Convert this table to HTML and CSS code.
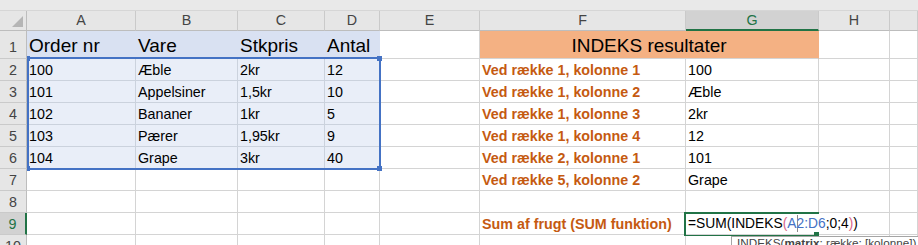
FILE: index.html
```html
<!DOCTYPE html>
<html lang="da">
<head>
    <meta charset="UTF-8">
    <meta name="viewport" content="width=device-width, initial-scale=1.0">
    <title>INDEKS eksempel</title>
    <link rel="stylesheet" href="styles.css">
</head>
<body>
    <div class="sheet">
        <div class="strip"></div>

        <!-- kolonneoverskrifter -->
        <div class="cell corner">
            <svg width="11" height="11" viewBox="0 0 11 11"><polygon points="0,11 11,11 11,0" fill="#b5b5b5"/></svg>
        </div>
        <div class="cell col">A</div>
        <div class="cell col">B</div>
        <div class="cell col">C</div>
        <div class="cell col">D</div>
        <div class="cell col">E</div>
        <div class="cell col">F</div>
        <div class="cell col sel">G</div>
        <div class="cell col">H</div>
        <div class="cell col"></div>

        <!-- række 1 -->
        <div class="cell rh big-row">1</div>
        <div class="cell big blue">Order nr</div>
        <div class="cell big blue">Vare</div>
        <div class="cell big blue">Stkpris</div>
        <div class="cell big blue">Antal</div>
        <div class="cell"></div>
        <div class="cell big peach">INDEKS resultater</div>
        <div class="cell"></div>
        <div class="cell"></div>

        <!-- række 2 -->
        <div class="cell rh">2</div>
        <div class="cell hl">100</div>
        <div class="cell hl">Æble</div>
        <div class="cell hl">2kr</div>
        <div class="cell hl">12</div>
        <div class="cell"></div>
        <div class="cell label">Ved række 1, kolonne 1</div>
        <div class="cell">100</div>
        <div class="cell"></div>
        <div class="cell"></div>

        <!-- række 3 -->
        <div class="cell rh">3</div>
        <div class="cell hl">101</div>
        <div class="cell hl">Appelsiner</div>
        <div class="cell hl">1,5kr</div>
        <div class="cell hl">10</div>
        <div class="cell"></div>
        <div class="cell label">Ved række 1, kolonne 2</div>
        <div class="cell">Æble</div>
        <div class="cell"></div>
        <div class="cell"></div>

        <!-- række 4 -->
        <div class="cell rh">4</div>
        <div class="cell hl">102</div>
        <div class="cell hl">Bananer</div>
        <div class="cell hl">1kr</div>
        <div class="cell hl">5</div>
        <div class="cell"></div>
        <div class="cell label">Ved række 1, kolonne 3</div>
        <div class="cell">2kr</div>
        <div class="cell"></div>
        <div class="cell"></div>

        <!-- række 5 -->
        <div class="cell rh">5</div>
        <div class="cell hl">103</div>
        <div class="cell hl">Pærer</div>
        <div class="cell hl">1,95kr</div>
        <div class="cell hl">9</div>
        <div class="cell"></div>
        <div class="cell label">Ved række 1, kolonne 4</div>
        <div class="cell">12</div>
        <div class="cell"></div>
        <div class="cell"></div>

        <!-- række 6 -->
        <div class="cell rh">6</div>
        <div class="cell hl">104</div>
        <div class="cell hl">Grape</div>
        <div class="cell hl">3kr</div>
        <div class="cell hl">40</div>
        <div class="cell"></div>
        <div class="cell label">Ved række 2, kolonne 1</div>
        <div class="cell">101</div>
        <div class="cell"></div>
        <div class="cell"></div>

        <!-- række 7 -->
        <div class="cell rh">7</div>
        <div class="cell"></div>
        <div class="cell"></div>
        <div class="cell"></div>
        <div class="cell"></div>
        <div class="cell"></div>
        <div class="cell label">Ved række 5, kolonne 2</div>
        <div class="cell">Grape</div>
        <div class="cell"></div>
        <div class="cell"></div>

        <!-- række 8 -->
        <div class="cell rh">8</div>
        <div class="cell"></div>
        <div class="cell"></div>
        <div class="cell"></div>
        <div class="cell"></div>
        <div class="cell"></div>
        <div class="cell"></div>
        <div class="cell"></div>
        <div class="cell"></div>
        <div class="cell"></div>

        <!-- række 9, formlen redigeres i G9 -->
        <div class="cell rh sel">9</div>
        <div class="cell"></div>
        <div class="cell"></div>
        <div class="cell"></div>
        <div class="cell"></div>
        <div class="cell"></div>
        <div class="cell label">Sum af frugt (SUM funktion)</div>
        <div class="cell edit"><span class="formula">=SUM(INDEKS<span class="paren">(</span><span class="ref">A</span><span class="caret"></span><span class="ref">2:D6</span>;0;4<span class="paren">)</span>)</span></div>
        <div class="cell"></div>
        <div class="cell"></div>

        <!-- række 10 -->
        <div class="cell rh">10</div>
        <div class="cell"></div>
        <div class="cell"></div>
        <div class="cell"></div>
        <div class="cell"></div>
        <div class="cell"></div>
        <div class="cell"></div>
        <div class="cell"></div>
        <div class="cell"></div>
        <div class="cell"></div>

        <!-- markering af området A2:D6 -->
        <div class="range"></div>
        <div class="knob knob-tl"></div>
        <div class="knob knob-tr"></div>
        <div class="knob knob-bl"></div>
        <div class="knob knob-br"></div>

        <!-- aktiv celle -->
        <div class="active"></div>
        <div class="fill-handle"></div>

        <div class="tip">INDEKS(<b>matrix</b>; række; [kolonne])</div>
    </div>
</body>
</html>
```

FILE: styles.css
```css
* {
    box-sizing: border-box;
}
html, body {
    margin: 0;
    height: 100%;
    overflow: hidden;
    background: #fff;
}
body {
    font-family: "Liberation Sans", Arial, sans-serif;
    font-size: 14.3px;
    color: #000;
}
.sheet {
    position: relative;
    display: grid;
    grid-template-columns: 27px 109px 102px 87px 55px 100px 206px 133px 71px 1fr;
    grid-template-rows: 11px 20px 28px repeat(9, 22px);
}
.strip {
    grid-column: 1 / -1;
    background: #e9e9e9;
    border-bottom: 1px solid #d6d6d6;
}
.cell {
    display: flex;
    align-items: flex-end;
    padding: 0 2px 2px;
    line-height: 1.15;
    white-space: nowrap;
    overflow: hidden;
    border-right: 1px solid #d4d4d4;
    border-bottom: 1px solid #d4d4d4;
}

/* overskrifter */
.corner {
    justify-content: flex-end;
    padding: 0 3px 3px 0;
    background: #e6e6e6;
    border-right-color: #bdbdbd;
    border-bottom-color: #bdbdbd;
}
.col {
    justify-content: center;
    background: #e6e6e6;
    color: #444;
    border-right-color: #cacaca;
    border-bottom-color: #bdbdbd;
}
.rh {
    justify-content: center;
    background: #e6e6e6;
    color: #444;
    border-right-color: #bdbdbd;
    border-bottom-color: #cacaca;
}
.big-row {
    padding-bottom: 3px;
}
.col.sel {
    background: #d2d2d2;
    color: #217346;
    border-bottom: 2px solid #217346;
    padding-bottom: 1px;
}
.rh.sel {
    background: #d2d2d2;
    color: #217346;
    border-right: 2px solid #217346;
}

/* celler */
.big {
    font-size: 19px;
    padding-bottom: 1px;
}
.blue {
    background: #d9e1f2;
    border-right-color: transparent;
}
.peach {
    grid-column: span 2;
    justify-content: center;
    background: #f4b183;
    border-right-color: transparent;
}
.hl {
    background: #e9eef8;
    border-right-color: #cbd2dd;
    border-bottom-color: #cbd2dd;
}
.label {
    font-weight: bold;
    color: #c55a11;
}
.edit {
    overflow: visible;
    border-right-color: transparent;
    position: relative;
    z-index: 2;
}
.formula {
    font-size: 13.8px;
    background: #fff;
    padding-right: 2px;
}
.paren {
    color: #d9668a;
}
.ref {
    color: #4472c4;
}
.caret {
    display: inline-block;
    width: 1px;
    height: 17px;
    margin-right: -1px;
    vertical-align: -4px;
    background: #8a8a8a;
}

/* markeringer oven paa arket */
.range {
    position: absolute;
    left: 27px;
    top: 57px;
    width: 354px;
    height: 113px;
    border: 2px solid #4472c4;
}
.knob {
    position: absolute;
    width: 5px;
    height: 5px;
    background: #4472c4;
}
.knob-tl { left: 27px; top: 56px; width: 3px; }
.knob-tr { left: 377px; top: 56px; }
.knob-bl { left: 27px; top: 166px; width: 3px; }
.knob-br { left: 377px; top: 166px; }
.active {
    position: absolute;
    left: 684px;
    top: 212px;
    width: 135px;
    height: 24px;
    border: 2px solid #217346;
    border-right: none;
    z-index: 1;
}
.fill-handle {
    position: absolute;
    left: 814px;
    top: 232px;
    width: 5px;
    height: 5px;
    background: #217346;
    z-index: 3;
}
.tip {
    position: absolute;
    left: 731px;
    top: 236px;
    padding: 0 5px;
    font-size: 11.7px;
    line-height: 12px;
    color: #444;
    background: #fff;
    border: 1px solid #a5a5a5;
    white-space: nowrap;
    z-index: 4;
}
```
